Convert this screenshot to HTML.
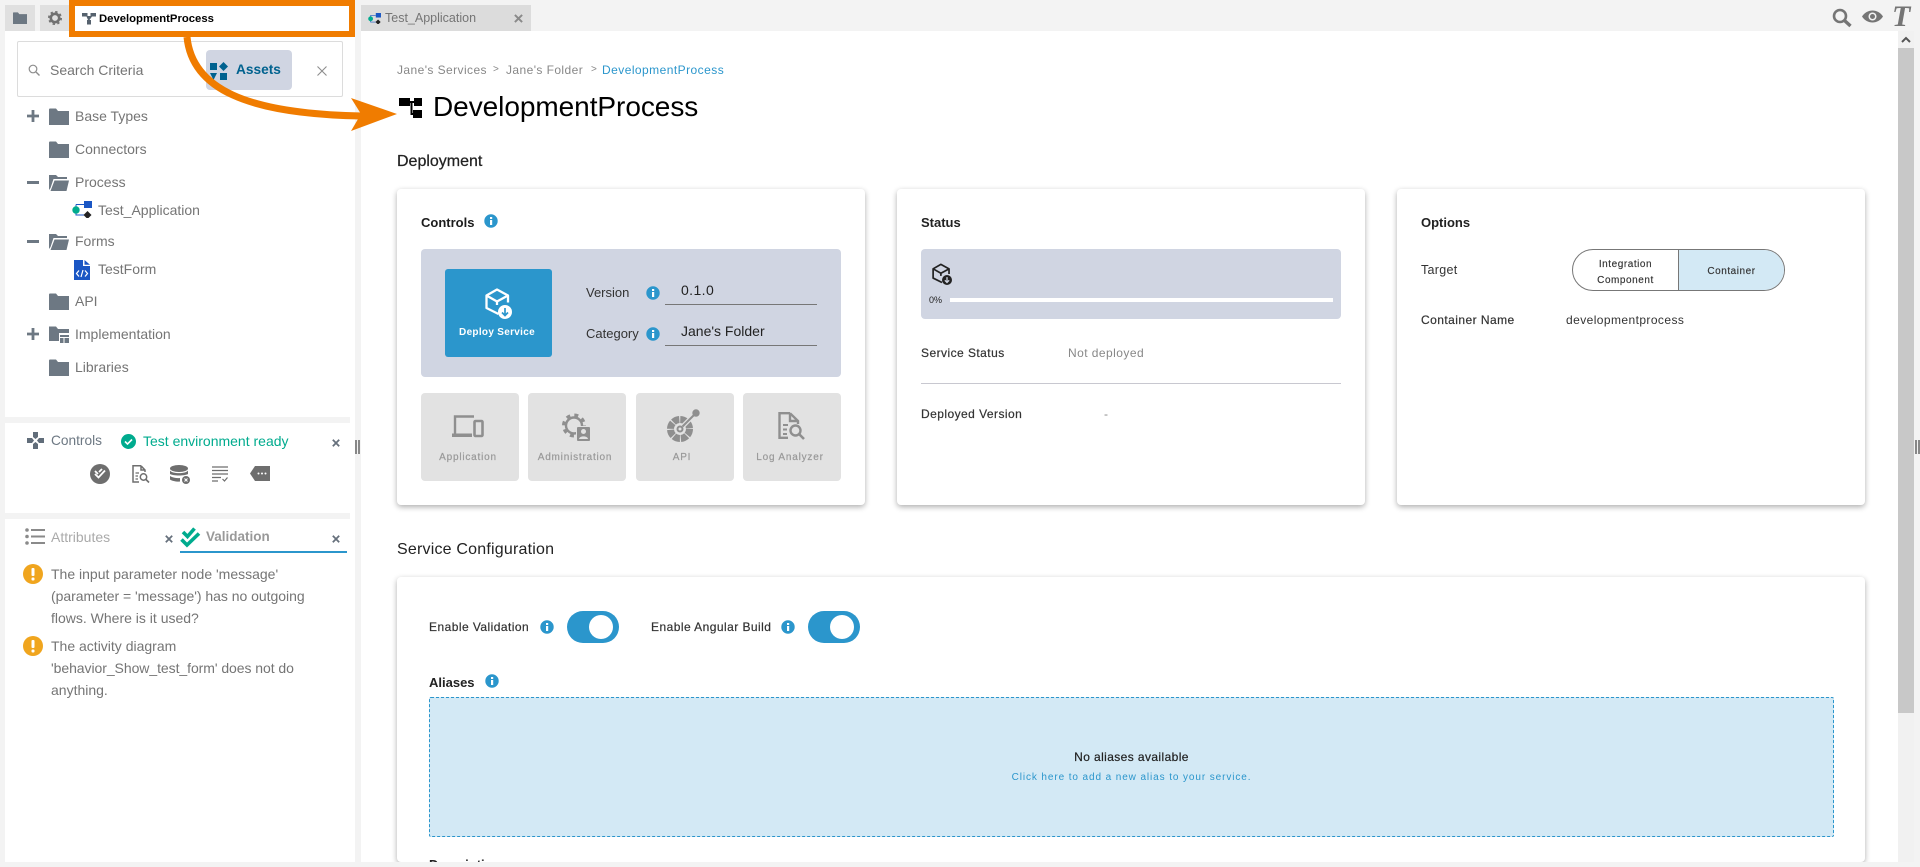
<!DOCTYPE html>
<html><head><meta charset="utf-8"><title>DevelopmentProcess</title>
<style>
html,body{margin:0;padding:0;width:1920px;height:867px;overflow:hidden;background:#f3f3f3;font-family:"Liberation Sans",sans-serif}
.b{position:absolute;box-sizing:border-box}
.t{position:absolute;white-space:nowrap;line-height:20px;height:20px;color:#757575;font-size:14px}
svg{position:absolute;overflow:visible}
.card{position:absolute;background:#fff;border-radius:4px;box-shadow:0 2px 6px rgba(0,0,0,.32)}
.h{color:#1c1c1c;font-weight:bold;font-size:13px}
.l{color:#333;font-size:12px;letter-spacing:.45px;-webkit-text-stroke:.2px #333}
.tile{position:absolute;top:393px;width:98px;height:88px;background:#e2e2e2;border-radius:4px}
.tl{position:absolute;top:448px;width:98px;text-align:center;line-height:20px;font-size:10px;letter-spacing:.8px;color:#999;white-space:nowrap;-webkit-text-stroke:.2px #999}
</style></head>
<body>
<svg width="0" height="0" style="left:0;top:0">
<defs>
<symbol id="info" viewBox="0 0 14 14"><circle cx="7" cy="7" r="6.7" fill="#2b96cc"/><rect x="6" y="3" width="2.2" height="2" fill="#fff"/><rect x="6" y="6" width="2.2" height="5" fill="#fff"/></symbol>
<symbol id="fold" viewBox="0 0 20 17"><path d="M0 1.5A1 1 0 0 1 1 .5H7L9 3H20V17H0Z" fill="#6d7883"/></symbol>
<symbol id="open" viewBox="0 0 20 17"><path d="M0 1H7L9 3H18V5H4.500L1.500 14 0 16ZM5.500 6.500H20L17.500 17H1.500Z" fill="#6d7883"/></symbol>
<symbol id="x" viewBox="0 0 10 10"><path d="M1 1L9 9M9 1L1 9" stroke="#66707c" stroke-width="2.200" fill="none"/></symbol>
<symbol id="box" viewBox="0 0 27 29"><path d="M13.500 26L1.500 20V7.500L12 1.500 23 7.500V14.500M1.500 7.500L12 13.500 23 7.500M12 13.500V17" fill="none" stroke="currentColor" stroke-width="2.300" stroke-linejoin="round"/></symbol>
<symbol id="warn" viewBox="0 0 20 20"><circle cx="10" cy="10" r="10" fill="#f0a51e"/><rect x="8.500" y="4" width="3" height="8" rx="1" fill="#fff"/><rect x="8.500" y="13.500" width="3" height="3" rx="1" fill="#fff"/></symbol>
<symbol id="app" viewBox="0 0 20 17"><path d="M4 3.500H12M4 3.500V14H12" stroke="#1a56c4" stroke-width="1" fill="none"/><circle cx="4" cy="9" r="3.700" fill="#00ab8e"/><rect x="12" y="0" width="8" height="7" fill="#1a56c4"/><path d="M15.500 10L19.500 14 15.500 18 11.500 14Z" fill="#222"/></symbol>
</defs>
</svg>

<!-- left panels -->
<div class="b" style="left:5px;top:31px;width:350px;height:386px;background:#fff"></div>
<div class="b" style="left:350px;top:417px;width:5px;height:6px;background:#fff"></div>
<div class="b" style="left:5px;top:423px;width:350px;height:90px;background:#fff"></div>
<div class="b" style="left:350px;top:513px;width:5px;height:6px;background:#fff"></div>
<div class="b" style="left:5px;top:519px;width:350px;height:343px;background:#fff"></div>
<div class="b" style="left:355px;top:440px;width:2px;height:14px;background:#888"></div>
<div class="b" style="left:358px;top:440px;width:2px;height:14px;background:#888"></div>

<!-- tabs -->
<div class="b" style="left:5px;top:5px;width:30px;height:26px;background:#e0e0e0"></div>
<svg style="left:13px;top:12px" width="14" height="12"><use href="#fold" width="14" height="12"/></svg>
<div class="b" style="left:40px;top:5px;width:29px;height:26px;background:#e0e0e0"></div>
<svg style="left:48px;top:11px" width="14" height="14" viewBox="0 0 14 14"><circle cx="7" cy="7" r="4.200" fill="none" stroke="#707070" stroke-width="2.600"/><circle cx="7" cy="7" r="6.200" fill="none" stroke="#707070" stroke-width="1.600" stroke-dasharray="2.400 2.470"/></svg>
<div class="b" style="left:69px;top:0;width:286px;height:37px;border:6px solid #f07c00;background:#fff"></div>
<svg style="left:82px;top:13px" width="14" height="12" viewBox="0 0 14 12"><path d="M0 0H5.500V3H8.500V0H14V3.500H10L7.500 7H9V11.500H5V7H6L4.500 3.500H0Z" fill="#56626e"/></svg>
<div class="t" style="left:99px;top:9px;color:#000;font-weight:bold;font-size:11.300px">DevelopmentProcess</div>

<div class="b" style="left:361px;top:5px;width:170px;height:26px;background:#dcdcdc"></div>
<svg style="left:368px;top:13px" width="13" height="11"><use href="#app" width="13" height="11"/></svg>
<div class="t" style="left:385px;top:8px;color:#757575;font-size:12.500px">Test_Application</div>
<svg style="left:514px;top:14px" width="9" height="9" viewBox="0 0 10 10"><path d="M1 1L9 9M9 1L1 9" stroke="#8a8a8a" stroke-width="2.200" fill="none"/></svg>

<!-- search -->
<div class="b" style="left:17px;top:41px;width:326px;height:56px;border:1px solid #dcdcdc;border-radius:2px"></div>
<svg style="left:28px;top:64px" width="12" height="12" viewBox="0 0 12 12"><circle cx="5" cy="5" r="3.800" fill="none" stroke="#8d8d8d" stroke-width="1.200"/><path d="M8 8L11.500 11.500" stroke="#8d8d8d" stroke-width="1.400"/></svg>
<div class="t" style="left:50px;top:60px">Search Criteria</div>
<div class="b" style="left:206px;top:50px;width:86px;height:40px;background:#d0d5e2;border-radius:4px"></div>
<svg style="left:210px;top:62px" width="18" height="18" viewBox="0 0 18 18"><rect x="0" y="1" width="7" height="7" fill="#00628f"/><path d="M13.500 0L18 4.500 13.500 9 9 4.500Z" fill="#00628f"/><path d="M0 11H7L3.500 18Z" fill="#00628f"/><rect x="10" y="11" width="7" height="7" fill="#00628f"/></svg>
<div class="t" style="left:236px;top:60px;color:#00628f;font-weight:bold;font-size:13.700px">Assets</div>
<svg style="left:317px;top:66px" width="10" height="10" viewBox="0 0 10 10"><path d="M.5 .5L9.500 9.500M9.500 .5L.5 9.500" stroke="#8d8d8d" stroke-width="1.100" fill="none"/></svg>

<!-- tree -->
<svg style="left:27px;top:110px" width="12" height="12" viewBox="0 0 12 12"><path d="M6 0V12M0 6H12" stroke="#6d7883" stroke-width="2.800"/></svg>
<svg style="left:49px;top:108px" width="20" height="17"><use href="#fold" width="20" height="17"/></svg>
<div class="t" style="left:75px;top:106px">Base Types</div>
<svg style="left:49px;top:141px" width="20" height="17"><use href="#fold" width="20" height="17"/></svg>
<div class="t" style="left:75px;top:139px">Connectors</div>
<div class="b" style="left:27px;top:181px;width:12px;height:3px;background:#6d7883"></div>
<svg style="left:49px;top:174px" width="20" height="17"><use href="#open" width="20" height="17"/></svg>
<div class="t" style="left:75px;top:172px">Process</div>
<svg style="left:72px;top:201px" width="20" height="17"><use href="#app" width="20" height="17"/></svg>
<div class="t" style="left:98px;top:200px">Test_Application</div>
<div class="b" style="left:27px;top:240px;width:12px;height:3px;background:#6d7883"></div>
<svg style="left:49px;top:233px" width="20" height="17"><use href="#open" width="20" height="17"/></svg>
<div class="t" style="left:75px;top:231px">Forms</div>
<svg style="left:74px;top:260px" width="16" height="20" viewBox="0 0 16 20"><path d="M0 0H9V6H16V20H0Z" fill="#1a56c4"/><path d="M10.500 0L16 4.800H10.500Z" fill="#1a56c4"/><path d="M5 10.500L2.500 13.500 5 16.500M11 10.500L13.500 13.500 11 16.500M9 10L7 17" stroke="#fff" stroke-width="1.200" fill="none"/></svg>
<div class="t" style="left:98px;top:259px">TestForm</div>
<svg style="left:49px;top:293px" width="20" height="17"><use href="#fold" width="20" height="17"/></svg>
<div class="t" style="left:75px;top:291px">API</div>
<svg style="left:27px;top:328px" width="12" height="12" viewBox="0 0 12 12"><path d="M6 0V12M0 6H12" stroke="#6d7883" stroke-width="2.800"/></svg>
<svg style="left:49px;top:326px" width="20" height="17" viewBox="0 0 20 17"><path d="M0 .5H7L9 3H20V7H10V15H0Z" fill="#6d7883"/><path d="M11 9H20V11H11ZM11 12H14.500V17H11ZM15.500 12H20V17H15.500Z" fill="#6d7883"/></svg>
<div class="t" style="left:75px;top:324px">Implementation</div>
<svg style="left:49px;top:359px" width="20" height="17"><use href="#fold" width="20" height="17"/></svg>
<div class="t" style="left:75px;top:357px">Libraries</div>

<!-- controls panel -->
<svg style="left:27px;top:432px" width="17" height="17" viewBox="0 0 17 17"><path d="M6 0H11V5L8.500 7 6 5ZM6 17H11V12L8.500 10 6 12ZM0 6H5L7 8.500 5 11H0ZM17 6H12L10 8.500 12 11H17Z" fill="#616d7a"/></svg>
<div class="t" style="left:51px;top:431px;color:#6d7883;font-size:13.700px">Controls</div>
<svg style="left:121px;top:434px" width="15" height="15" viewBox="0 0 15 15"><circle cx="7.500" cy="7.500" r="7.500" fill="#00ab8e"/><path d="M4 7.500L6.500 10 11 5.500" stroke="#fff" stroke-width="1.600" fill="none"/></svg>
<div class="t" style="left:143px;top:431px;color:#00ab8e;font-size:14px">Test environment ready</div>
<svg style="left:332px;top:439px" width="8" height="8"><use href="#x" width="8" height="8"/></svg>

<svg style="left:90px;top:464px" width="20" height="20" viewBox="0 0 20 20"><circle cx="10" cy="10" r="10" fill="#6e6e6e"/><path d="M5 10L8.500 13.500 15 6.500M5 7L8 10M9 8L12 5" stroke="#fff" stroke-width="1.800" fill="none"/></svg>
<svg style="left:132px;top:465px" width="18" height="18" viewBox="0 0 18 18"><path d="M9 .8H1V17H7M9 .8L13 5V7M9 .8V5H13" fill="none" stroke="#6e6e6e" stroke-width="1.500"/><path d="M3.500 8H7M3.500 11H6M3.500 14H6" stroke="#6e6e6e" stroke-width="1.300"/><circle cx="11.500" cy="12" r="3.200" fill="none" stroke="#6e6e6e" stroke-width="1.500"/><path d="M14 14.500L17 17.500" stroke="#6e6e6e" stroke-width="1.600"/></svg>
<svg style="left:170px;top:465px" width="20" height="19" viewBox="0 0 20 19"><ellipse cx="9" cy="3.500" rx="9" ry="3.500" fill="#6e6e6e"/><path d="M0 5.500C2 9 16 9 18 5.500V9C15 11 3 11 0 9ZM0 11C3 13 8 13.500 10 13V16.500C7 17 2 16 0 14.500Z" fill="#6e6e6e"/><circle cx="16" cy="15" r="4" fill="#6e6e6e"/><path d="M14.500 13.500L17.500 16.500M17.500 13.500L14.500 16.500" stroke="#fff" stroke-width="1"/></svg>
<svg style="left:212px;top:466px" width="16" height="16" viewBox="0 0 16 16"><path d="M0 1H16M0 4.500H16M0 8H16M0 11.500H9M0 15H6" stroke="#6e6e6e" stroke-width="1.300"/><path d="M10.500 13L12.500 15 15.500 11.500" stroke="#6e6e6e" stroke-width="1.200" fill="none"/></svg>
<svg style="left:250px;top:466px" width="20" height="15" viewBox="0 0 20 15"><path d="M5 0H20V15H5L0 7.500Z" fill="#6e6e6e"/><circle cx="8.500" cy="7.500" r="1" fill="#fff"/><circle cx="12" cy="7.500" r="1" fill="#fff"/><circle cx="15.500" cy="7.500" r="1" fill="#fff"/></svg>

<!-- attributes/validation -->
<svg style="left:25px;top:528px" width="20" height="17" viewBox="0 0 20 17"><circle cx="2" cy="2" r="1.800" fill="#8a8a8a"/><circle cx="2" cy="8.500" r="1.800" fill="#8a8a8a"/><circle cx="2" cy="15" r="1.800" fill="#8a8a8a"/><path d="M6 2H20M6 8.500H20M6 15H20" stroke="#8a8a8a" stroke-width="2"/></svg>
<div class="t" style="left:51px;top:527px;color:#aaa;font-size:14px">Attributes</div>
<svg style="left:165px;top:535px" width="8" height="8"><use href="#x" width="8" height="8"/></svg>
<svg style="left:180px;top:527px" width="20" height="20" viewBox="0 0 20 20"><path d="M1.500 12.500L7 18 19 6.500M3 5L7.500 9.500 14.500 1.500" stroke="#00ab8e" stroke-width="3.600" fill="none"/></svg>
<div class="t" style="left:206px;top:527px;color:#999;font-weight:bold;font-size:13.500px">Validation</div>
<svg style="left:332px;top:535px" width="8" height="8"><use href="#x" width="8" height="8"/></svg>
<div class="b" style="left:180px;top:551px;width:167px;height:2px;background:#2b96cc"></div>

<svg style="left:23px;top:564px" width="20" height="20"><use href="#warn" width="20" height="20"/></svg>
<div class="t" style="left:51px;top:564px">The input parameter node 'message'</div>
<div class="t" style="left:51px;top:586px;letter-spacing:-.03px">(parameter = 'message') has no outgoing</div>
<div class="t" style="left:51px;top:608px">flows. Where is it used?</div>
<svg style="left:23px;top:636px" width="20" height="20"><use href="#warn" width="20" height="20"/></svg>
<div class="t" style="left:51px;top:636px">The activity diagram</div>
<div class="t" style="left:51px;top:658px;letter-spacing:-.06px">'behavior_Show_test_form' does not do</div>
<div class="t" style="left:51px;top:680px">anything.</div>

<!-- top right icons -->
<svg style="left:1832px;top:8px" width="20" height="19" viewBox="0 0 20 19"><circle cx="8" cy="8" r="6" fill="none" stroke="#757575" stroke-width="2.600"/><path d="M12.500 12.500L18.500 18" stroke="#757575" stroke-width="3.400"/></svg>
<svg style="left:1862px;top:10px" width="21" height="13" viewBox="0 0 21 13"><path d="M0 6.500C5 -1.500 16 -1.500 21 6.500 16 14.500 5 14.500 0 6.500Z" fill="#757575"/><circle cx="10.500" cy="6.500" r="4" fill="#f3f3f3"/><circle cx="10.500" cy="6.500" r="2.500" fill="#757575"/></svg>
<div class="t" style="left:1892px;top:4px;height:26px;line-height:26px;font-family:'Liberation Serif',serif;font-style:italic;font-weight:bold;font-size:30px;color:#757575">T</div>

<!-- main content -->
<div class="b" style="left:361px;top:31px;width:1537px;height:831px;background:#fff;overflow:hidden">
<div style="position:absolute;left:-361px;top:-31px;width:1920px;height:867px">

<div class="t" style="left:397px;top:60px;font-size:12px;letter-spacing:.42px;color:#888">Jane's Services</div>
<div class="t" style="left:493px;top:60px;font-size:10px;color:#888">&gt;</div>
<div class="t" style="left:506px;top:60px;font-size:12px;letter-spacing:.42px;color:#888">Jane's Folder</div>
<div class="t" style="left:591px;top:60px;font-size:10px;color:#888">&gt;</div>
<div class="t" style="left:602px;top:60px;font-size:12px;letter-spacing:.45px;color:#2b96cc">DevelopmentProcess</div>

<svg style="left:399px;top:98px" width="23" height="20" viewBox="0 0 23 20"><rect x="0" y="0" width="11" height="8" fill="#000"/><rect x="15" y="0" width="8" height="8" fill="#000"/><rect x="14" y="12" width="9" height="8" fill="#000"/><path d="M11 4H15M12.500 4V16H14" stroke="#000" stroke-width="2" fill="none"/></svg>
<div class="t" style="left:433px;top:87px;height:40px;line-height:40px;font-size:28px;letter-spacing:-.05px;color:#000">DevelopmentProcess</div>

<div class="t" style="left:397px;top:152px;font-size:16px;color:#222;-webkit-text-stroke:.25px #222">Deployment</div>

<!-- controls card -->
<div class="card" style="left:397px;top:189px;width:468px;height:316px"></div>
<div class="t h" style="left:421px;top:213px">Controls</div>
<svg style="left:484px;top:214px" width="14" height="14"><use href="#info" width="14" height="14"/></svg>
<div class="b" style="left:421px;top:249px;width:420px;height:128px;background:#d0d5e2;border-radius:4px"></div>
<div class="b" style="left:445px;top:269px;width:107px;height:88px;background:#2b96cc;border-radius:3px"></div>
<svg style="left:485px;top:288px;color:#fff" width="27" height="29"><use href="#box" width="27" height="29"/></svg>
<svg style="left:498px;top:305px" width="14" height="14" viewBox="0 0 14 14"><circle cx="7" cy="7" r="7" fill="#fff"/><path d="M7 3V10M4 7.500L7 10.500 10 7.500" stroke="#2b96cc" stroke-width="1.700" fill="none"/></svg>
<div class="t" style="left:445px;top:323px;width:104px;text-align:center;color:#fff;font-weight:bold;font-size:10px;letter-spacing:.3px">Deploy Service</div>
<div class="t" style="left:586px;top:283px;color:#333;font-size:13px">Version</div>
<svg style="left:646px;top:286px" width="14" height="14"><use href="#info" width="14" height="14"/></svg>
<div class="b" style="left:665px;top:304px;width:152px;height:1px;background:#777"></div>
<div class="t" style="left:681px;top:280px;color:#222;font-size:14px;letter-spacing:.4px">0.1.0</div>
<div class="t" style="left:586px;top:324px;color:#333;font-size:13px">Category</div>
<svg style="left:646px;top:327px" width="14" height="14"><use href="#info" width="14" height="14"/></svg>
<div class="b" style="left:665px;top:345px;width:152px;height:1px;background:#777"></div>
<div class="t" style="left:681px;top:321px;color:#222;font-size:14px">Jane's Folder</div>

<div class="tile" style="left:421px"></div><div class="tile" style="left:528px"></div><div class="tile" style="left:636px"></div><div class="tile" style="left:743px"></div>
<svg style="left:452px;top:415px" width="32" height="22" viewBox="0 0 32 22"><path d="M3 20V1.500H22" fill="none" stroke="#8f8f8f" stroke-width="2.400"/><rect x="0" y="18.500" width="20" height="3.500" fill="#8f8f8f"/><rect x="22.500" y="6" width="8" height="15" rx="1" fill="none" stroke="#8f8f8f" stroke-width="2.600"/></svg>
<div class="tl" style="left:419px">Application</div>
<svg style="left:562px;top:413px" width="28" height="28" viewBox="0 0 28 28"><circle cx="12" cy="12.500" r="8" fill="none" stroke="#8f8f8f" stroke-width="2.400"/><circle cx="12" cy="12.500" r="10.500" fill="none" stroke="#8f8f8f" stroke-width="3" stroke-dasharray="4 4.250"/><rect x="14.500" y="13.500" width="14" height="15" rx="1.500" fill="#8f8f8f" stroke="#e2e2e2" stroke-width="1"/><circle cx="21.500" cy="18.500" r="2.500" fill="#e2e2e2"/><path d="M17 26C17.500 22.500 25.500 22.500 26 26Z" fill="#e2e2e2"/></svg>
<div class="tl" style="left:526px">Administration</div>
<svg style="left:667px;top:410px" width="33" height="33" viewBox="0 0 33 33"><circle cx="13" cy="19" r="9.500" fill="none" stroke="#8f8f8f" stroke-width="7" stroke-dasharray="6.460 1"/><circle cx="13" cy="19" r="3.500" fill="#8f8f8f"/><circle cx="13" cy="19" r="1.500" fill="#e2e2e2"/><path d="M16 16L29 3" stroke="#e2e2e2" stroke-width="4.500"/><path d="M15.500 16.500L29 3" stroke="#8f8f8f" stroke-width="2"/><circle cx="29" cy="3" r="3.700" fill="#8f8f8f"/></svg>
<div class="tl" style="left:633px">API</div>
<svg style="left:778px;top:412px" width="27" height="28" viewBox="0 0 27 28"><path d="M12 1.200H1.500V25.800H10M12 1.200L20 9V12M12 1.200V9H20" fill="none" stroke="#8f8f8f" stroke-width="2.400"/><path d="M5 13H10M5 17.500H9M5 22H9" stroke="#8f8f8f" stroke-width="2"/><circle cx="17.500" cy="18.500" r="5" fill="none" stroke="#8f8f8f" stroke-width="2.400"/><path d="M21 22L26 27" stroke="#8f8f8f" stroke-width="2.600"/></svg>
<div class="tl" style="left:741px">Log Analyzer</div>

<!-- status card -->
<div class="card" style="left:897px;top:189px;width:468px;height:316px"></div>
<div class="t h" style="left:921px;top:213px;color:#222">Status</div>
<div class="b" style="left:921px;top:249px;width:420px;height:70px;background:#d0d5e2;border-radius:4px"></div>
<svg style="left:932px;top:263px;color:#222" width="20" height="22"><use href="#box" width="20" height="22"/></svg>
<svg style="left:942px;top:275px" width="10" height="10" viewBox="0 0 14 14"><circle cx="7" cy="7" r="7" fill="#222"/><path d="M7 3V10M4 7.500L7 10.500 10 7.500" stroke="#d0d5e2" stroke-width="1.800" fill="none"/></svg>
<div class="t" style="left:929px;top:290px;font-size:9px;color:#222">0%</div>
<div class="b" style="left:950px;top:298px;width:383px;height:4px;background:#fff"></div>
<div class="t l" style="left:921px;top:343px">Service Status</div>
<div class="t" style="left:1068px;top:343px;font-size:12px;letter-spacing:.45px;color:#888">Not deployed</div>
<div class="b" style="left:921px;top:383px;width:420px;height:1px;background:#c8c8d0"></div>
<div class="t l" style="left:921px;top:404px">Deployed Version</div>
<div class="t" style="left:1104px;top:404px;font-size:12px;color:#888">-</div>

<!-- options card -->
<div class="card" style="left:1397px;top:189px;width:468px;height:316px"></div>
<div class="t h" style="left:1421px;top:213px;color:#222">Options</div>
<div class="t" style="left:1421px;top:260px;font-size:12.500px;color:#333;letter-spacing:.3px">Target</div>
<div class="b" style="left:1572px;top:249px;width:213px;height:42px;border:1px solid #777;border-radius:21px;overflow:hidden;background:#fff">
<div class="b" style="left:105px;top:0;width:108px;height:40px;background:#d3e9f5;border-left:1px solid #777"></div>
</div>
<div class="t" style="left:1572px;top:255px;width:107px;text-align:center;font-size:10px;letter-spacing:.55px;color:#333;-webkit-text-stroke:.15px #333">Integration</div>
<div class="t" style="left:1572px;top:271px;width:107px;text-align:center;font-size:10px;letter-spacing:.55px;color:#333;-webkit-text-stroke:.15px #333">Component</div>
<div class="t" style="left:1678px;top:262px;width:107px;text-align:center;font-size:10px;letter-spacing:.55px;color:#333;-webkit-text-stroke:.15px #333">Container</div>
<div class="t l" style="left:1421px;top:310px">Container Name</div>
<div class="t" style="left:1566px;top:310px;font-size:12px;letter-spacing:.42px;color:#333">developmentprocess</div>

<!-- service configuration -->
<div class="t" style="left:397px;top:540px;font-size:16px;letter-spacing:.2px;color:#222">Service Configuration</div>
<div class="card" style="left:397px;top:577px;width:1468px;height:285px"></div>
<div class="t l" style="left:429px;top:617px">Enable Validation</div>
<svg style="left:540px;top:620px" width="14" height="14"><use href="#info" width="14" height="14"/></svg>
<div class="b" style="left:567px;top:611px;width:52px;height:32px;border-radius:16px;background:#2b96cc"></div>
<div class="b" style="left:589px;top:615px;width:24px;height:24px;border-radius:12px;background:#fff"></div>
<div class="t l" style="left:651px;top:617px">Enable Angular Build</div>
<svg style="left:781px;top:620px" width="14" height="14"><use href="#info" width="14" height="14"/></svg>
<div class="b" style="left:808px;top:611px;width:52px;height:32px;border-radius:16px;background:#2b96cc"></div>
<div class="b" style="left:830px;top:615px;width:24px;height:24px;border-radius:12px;background:#fff"></div>
<div class="t h" style="left:429px;top:673px;color:#222">Aliases</div>
<svg style="left:485px;top:674px" width="14" height="14"><use href="#info" width="14" height="14"/></svg>
<div class="b" style="left:429px;top:697px;width:1405px;height:140px;background:#d3e9f5;border:1px dashed #2b96cc;border-radius:2px"></div>
<div class="t" style="left:429px;top:747px;width:1405px;text-align:center;font-size:12px;letter-spacing:.4px;color:#222;-webkit-text-stroke:.2px #222">No aliases available</div>
<div class="t" style="left:429px;top:768px;width:1405px;text-align:center;font-size:10px;letter-spacing:.9px;color:#2b96cc">Click here to add a new alias to your service.</div>
<div class="t h" style="left:429px;top:855px;height:7px;overflow:hidden;color:#222">Description</div>
</div>
</div>

<!-- scrollbar -->
<div class="b" style="left:1898px;top:31px;width:16px;height:831px;background:#f1f1f1"></div>
<div class="b" style="left:1898px;top:48px;width:16px;height:665px;background:#c8c8c8"></div>
<svg style="left:1901px;top:36px" width="10" height="7" viewBox="0 0 10 7"><path d="M1 6L5 2 9 6" fill="none" stroke="#555" stroke-width="2"/></svg>
<div class="b" style="left:1915px;top:440px;width:2px;height:14px;background:#888"></div>
<div class="b" style="left:1918px;top:440px;width:2px;height:14px;background:#888"></div>

<!-- orange arrow overlay -->
<svg style="left:0;top:0;z-index:5" width="1920" height="867" viewBox="0 0 1920 867"><path d="M187 37C192 88 245 114 362 116" fill="none" stroke="#f07c00" stroke-width="7"/><path d="M351 98L397 114 351 131 361 114Z" fill="#f07c00"/></svg>
</body></html>
